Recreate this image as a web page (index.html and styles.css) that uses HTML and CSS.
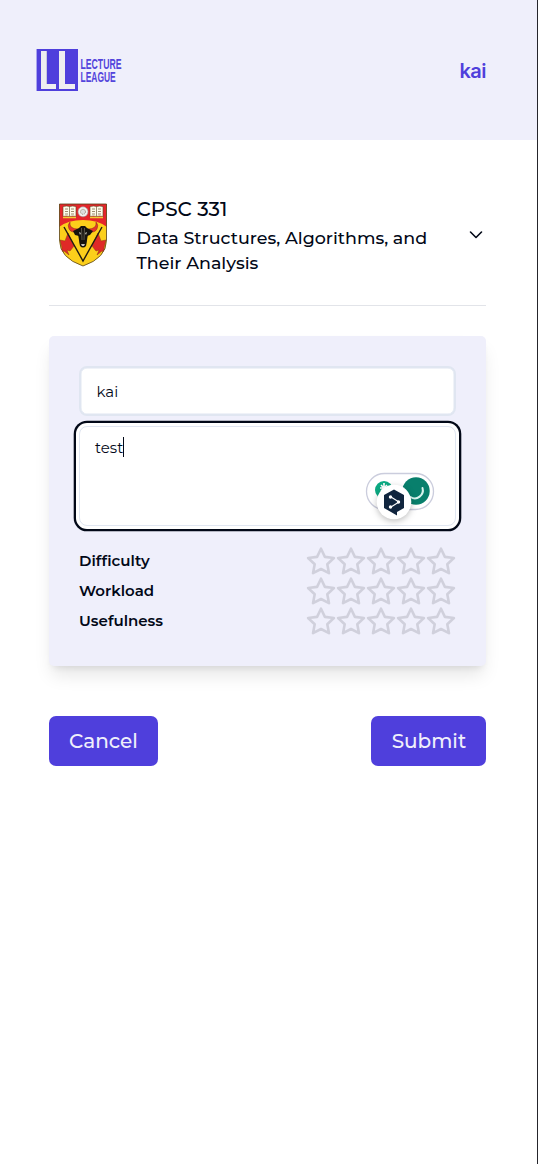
FILE: index.html
```html
<!DOCTYPE html>
<html lang="en">
<head>
<meta charset="utf-8">
<title>Lecture League</title>
<link rel="stylesheet" href="styles.css">
</head>
<body>
<header class="header">
  <svg class="logo" viewBox="0 0 86 42" role="img" aria-label="Lecture League">
    <path fill="#4f3fdc" d="M0 0h42v42H0z"/>
    <path fill="#aaa5ef" d="M0 0h1v42H0z"/>
    <path fill="#eeeef0" d="M5 2H11V35H20V40H5Z"/>
    <path fill="#eeeef0" d="M23 2H29V35H39V40H23Z"/>
    <path fill="#c9c8de" d="M10 2h1v33h-1z"/>
    <g class="logo-text">
      <text transform="translate(44.500 19.500) scale(.64 1)" textLength="64" lengthAdjust="spacingAndGlyphs">LECTURE</text>
      <text transform="translate(44.500 33) scale(.64 1)" textLength="55" lengthAdjust="spacingAndGlyphs">LEAGUE</text>
    </g>
  </svg>
  <span class="user">kai</span>
</header>
<main class="main">
  <section class="course">
    <svg class="crest" viewBox="0 0 48 64">
      <defs><clipPath id="shield"><path d="M.5 1h47v36q0 18-23.500 26Q.5 55 .5 37z"/></clipPath></defs>
      <g clip-path="url(#shield)">
        <path fill="#fccf1b" d="M0 0h48v64H0z"/>
        <path fill="#e5252b" d="M0 0h48v24q-9-7-24-7T0 24z"/>
        <path fill="#df2a27" stroke="#8e3a18" stroke-width=".5" d="M9 30l6 13-4 5-3-1 2 5-5-4-4 2 2-5-2-8 5 1zM39 30l-6 13 4 5 3-1-2 5 5-4 4 2-2-5 2-8-5 1z"/>
        <path d="M5 24l19 34 19-34" fill="none" stroke="#211b13" stroke-width="1.400"/>
      </g>
      <g stroke="#57451f" stroke-width=".6">
        <path fill="#fffbea" d="M4 3.500q4-1 6.500 0 3-1 6.500 0v10q-3.500-1-6.500 0-3-1-6.500 0zM31 3.500q4-1 6.500 0 3-1 6.500 0v10q-3.500-1-6.500 0-3-1-6.500 0z"/>
        <path d="M10.500 3.500v10M37.500 3.500v10M6 6h3M6 8.500h3M6 11h3M12 6h3M12 8.500h3M12 11h3M33 6h3M33 8.500h3M33 11h3M39 6h3M39 8.500h3M39 11h3"/>
        <path d="M4 14.500h13M31 14.500h13" stroke="#f1cc35" stroke-width="1.500"/>
        <circle cx="24" cy="8.800" r="5" fill="#f4f1ef" stroke="#999"/>
        <circle cx="24" cy="8.800" r="2.500" fill="#ddd" stroke-dasharray="1 1"/>
      </g>
      <path fill="#e5352b" stroke="#742218" stroke-width=".4" d="M19 26q-9 0-8-7-3 3-1 7t9 3zM29 26q9 0 8-7 3 3 1 7t-9 3z"/>
      <path fill="#15130f" d="M14 28l6-3 2-2h4l2 2 6 3-3 4-3 1-1 9q-3 4-6 0l-1-9-4-1z"/>
      <path fill="#15130f" d="M19 31h10l-2 12q-3 3-6 0z"/>
      <path fill="#c8c4bb" d="M20 29l2 1-1 2zM28 29l-2 1 1 2zM22 41h4l-1 2h-2z"/>
      <path fill="none" stroke="#777164" stroke-width=".7" d="M22.500 25l.5 12M25.500 25l-.5 12"/>
      <path fill="none" stroke="#574018" stroke-width=".8" d="M.5 1h47v36q0 18-23.500 26Q.5 55 .5 37z"/>
    </svg>
    <div class="course-text">
      <h1 class="code">CPSC 331</h1>
      <p class="title">Data Structures, Algorithms, and<br>Their Analysis</p>
    </div>
    <svg class="chevron" viewBox="0 0 14 10"><path d="M1.500 2l5.500 5.500L12.500 2"/></svg>
  </section>
  <form class="card">
    <div class="field">kai</div>
    <div class="area"><span class="typed">test</span><i class="caret"></i>
      <svg class="tools" viewBox="0 0 76 60">
        <rect x="4.500" y="8.500" width="67" height="36" rx="18" fill="#fff" stroke="#cbcddd" stroke-width="1.300"/>
        <circle cx="22" cy="25" r="9" fill="#0ca982"/>
        <path d="M22 18v8M18 23h8M19 20l6 6M25 20l-6 6" stroke="#fff" stroke-width="1.600"/>
        <circle cx="54" cy="26" r="13.700" fill="#087f6c"/>
        <path d="M60.500 23a8 8 0 0 1-12 9" fill="none" stroke="#d7f4ee" stroke-width="2" stroke-linecap="round"/>
        <circle class="bubble" cx="32" cy="37" r="17.300" fill="#fff"/>
        <path fill="#10253e" d="M32 24.500l10 5.500v13l-7 4v3.500l-6-3.500-7-4V30z"/>
        <path d="M29 32l8 5-8 5" fill="none" stroke="#fff" stroke-width="1.100"/>
        <g fill="#fff"><circle cx="28.500" cy="32" r="1.700"/><circle cx="36.500" cy="37" r="1.700"/><circle cx="28.500" cy="42" r="1.700"/></g>
      </svg>
    </div>
    <svg class="defs" aria-hidden="true"><symbol id="star" viewBox="0 0 30 30"><path d="M15 2.700l3.900 8.200 9 1.100-6.600 6.200 1.700 9-8-4.200-8 4.200 1.700-9L2.100 12l9-1.100z"/></symbol></svg>
    <div class="ratings">
      <div class="rating"><span class="label-wide">Difficulty</span><span class="stars"><svg><use href="#star"/></svg><svg><use href="#star"/></svg><svg><use href="#star"/></svg><svg><use href="#star"/></svg><svg><use href="#star"/></svg></span></div>
      <div class="rating"><span>Workload</span><span class="stars"><svg><use href="#star"/></svg><svg><use href="#star"/></svg><svg><use href="#star"/></svg><svg><use href="#star"/></svg><svg><use href="#star"/></svg></span></div>
      <div class="rating"><span>Usefulness</span><span class="stars"><svg><use href="#star"/></svg><svg><use href="#star"/></svg><svg><use href="#star"/></svg><svg><use href="#star"/></svg><svg><use href="#star"/></svg></span></div>
    </div>
  </form>
  <div class="actions">
    <button class="btn cancel">Cancel</button>
    <button class="btn submit">Submit</button>
  </div>
</main>
</body>
</html>
```
FILE: styles.css
```css
* { box-sizing: border-box; }
body { margin: 0; min-height: 1164px; background: #fff; border-right: 1px solid #25252b; color: #020817; font-family: Montserrat, Inter, sans-serif; }
h1, p { margin: 0; }
.header { height: 140px; background: #efeffb; display: flex; align-items: center; justify-content: space-between; padding: 0 51px 0 36px; }
.logo { width: 86px; height: 42px; overflow: visible; }
.logo-text { fill: #5344dc; font: 700 14px "Liberation Sans", sans-serif; }
.user { font: 600 20px/28px Inter, sans-serif; letter-spacing: -.5px; color: #4f3fdc; padding-top: 2px; }
.main { padding: 57px 50.600px 0 49px; }
.course { height: 109px; border-bottom: 1px solid #e2e4e9; display: flex; }
.crest { width: 48px; height: 64px; margin: 6px 0 0 9.500px; flex: none; }
.course-text { margin-left: 30px; flex: 1; white-space: nowrap; }
.code { font-size: 20px; line-height: 25px; font-weight: 500; }
.title { font-size: 17.500px; line-height: 25px; font-weight: 500; margin-top: 3px; }
.chevron { width: 14px; height: 10px; margin: 33px 3.500px 0 0; fill: none; stroke: #020817; stroke-width: 1.600; stroke-linecap: round; stroke-linejoin: round; }
.card { margin-top: 30px; height: 330px; padding: 30px; border-radius: 5px; background: #efeffb; box-shadow: 0 12px 18px -3px rgba(0,0,0,.1), 0 5px 7px -4px rgba(0,0,0,.1); }
.field { height: 50px; border: 2px solid #e0e6f1; box-shadow: inset 0 0 0 .5px #e0e6f1; border-radius: 8px; background: #fff; font-size: 15px; line-height: 46px; padding: 1px 15.500px; }
.area { position: relative; height: 100px; margin-top: 10px; border: 1px solid #e0e6f1; border-radius: 8px; background: #fff; box-shadow: 0 0 0 3px #fff, 0 0 0 5.300px #020817; font-size: 15px; line-height: 24px; padding: 9px 15px; display: flex; align-items: flex-start; }
.caret { width: 1.500px; height: 20px; margin: 1px 0 0 -.5px; background: #020817; }
.tools { position: absolute; right: 17px; top: 38px; width: 76px; height: 60px; overflow: visible; }
.bubble { filter: drop-shadow(0 2px 3px rgba(0,0,0,.25)); }
.defs { display: block; width: 0; height: 0; }
.ratings { margin-top: 19.500px; }
.rating { height: 30px; display: flex; justify-content: space-between; align-items: center; font-size: 15px; line-height: 18px; font-weight: 600; }
.label-wide { letter-spacing: .07px; }
.stars { display: flex; margin-right: .2px; }
.stars svg { width: 30px; height: 30px; fill: none; stroke: #d0d0dc; stroke-width: 2.600; stroke-linejoin: round; }
.actions { margin-top: 50px; display: flex; justify-content: space-between; }
.btn { height: 50px; border: 0; border-radius: 7px; background: #4f3fdc; color: #efeffb; font: 500 20px Montserrat, Inter, sans-serif; padding: 0; }
.cancel { width: 109px; }
.submit { width: 115px; }
```
